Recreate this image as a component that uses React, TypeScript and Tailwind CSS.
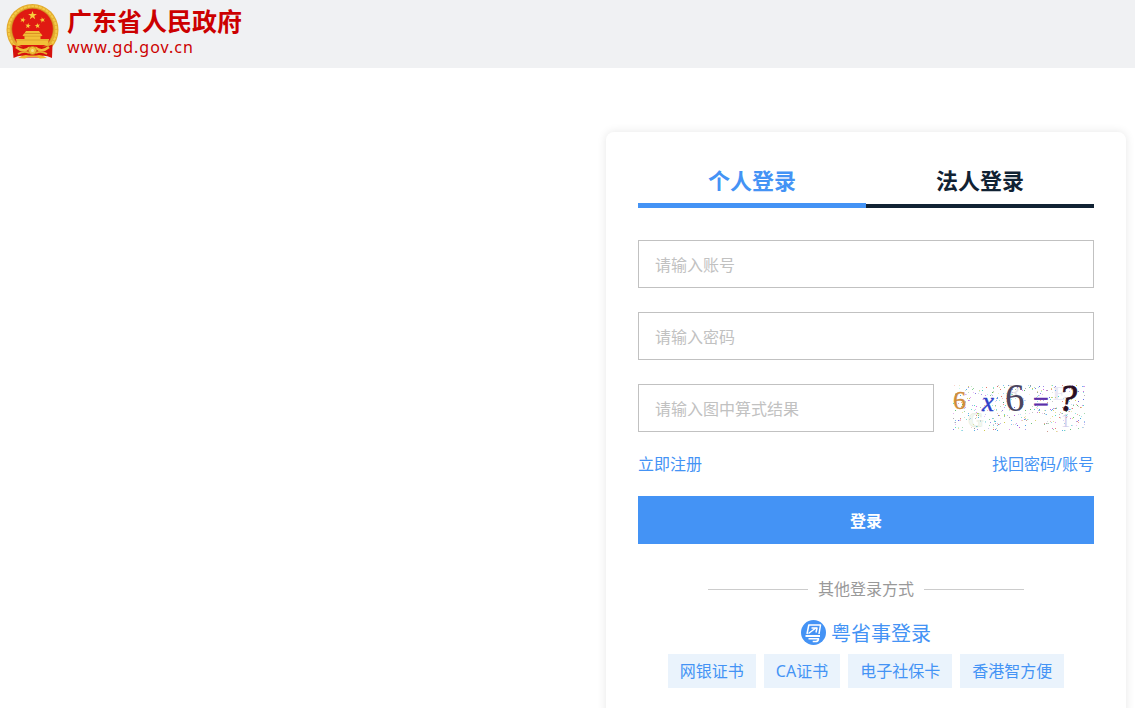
import React, { useState } from "react";

const loginMethods = ["网银证书", "CA证书", "电子社保卡", "香港智方便"];

const speckColors = ["#6a5be0", "#4bb35a", "#e06a5b", "#38a0e0", "#c65be0", "#c9c43e", "#8f8f8f", "#48d6c0"];

// Fixed-seed noise, so that the specks stay put between renders
function makeSpecks(count: number) {
    let seed = 41;
    const next = () => {
        seed = (seed * 16807) % 2147483647;
        return seed / 2147483647;
    };
    return Array.from({ length: count }, () => ({
        x: 3 + Math.floor(next() * 132),
        y: 1 + Math.floor(next() * 47),
        color: speckColors[Math.floor(next() * speckColors.length)],
        opacity: 0.25 + next() * 0.7
    }));
}

const specks = makeSpecks(460);

const star = "M0,-1 L0.235,-0.324 L0.951,-0.309 L0.38,0.124 L0.588,0.809 L0,0.4 L-0.588,0.809 L-0.38,0.124 L-0.951,-0.309 L-0.235,-0.324 Z";

function Emblem() {
    return (
        <svg viewBox="0 0 54 56" className="h-14 w-[54px] shrink-0" aria-hidden="true">
            <circle cx="26.5" cy="27" r="26" fill="#e3ab2e" />
            <circle cx="26.5" cy="27" r="23.8" fill="none" stroke="#f4cb48" strokeWidth="2" strokeDasharray="3 0.8" />
            <circle cx="26.5" cy="26" r="20.8" fill="#e01a12" stroke="#cf8f1e" strokeWidth="0.7" />
            <g fill="#f7cf3d">
                <path d={star} transform="translate(26.5 12.5) scale(4.6)" />
                <path d={star} transform="translate(16.8 17) rotate(15) scale(2.9)" />
                <path d={star} transform="translate(36.5 17) rotate(-15) scale(2.9)" />
                <path d={star} transform="translate(22 22.8) rotate(8) scale(2.9)" />
                <path d={star} transform="translate(31.5 22.8) rotate(-8) scale(2.9)" />
            </g>
            {/* Gate */}
            <path d="M20 28h13l1.5 2.2h-16z M18 30.5h17l1.5 2.5h-20z M18.5 33h16v3h-16z M10 36h33l-1.5 6h-30z" fill="#f2c038" />
            <path d="M19 30.4h15 M17.5 33.2h18 M11 37h31" stroke="#c98a1b" strokeWidth="0.5" />
            {/* Ribbon and gear */}
            <path d="M6.5 41.5Q14 45 21 42.5L32 42.5Q39 45 46.5 41.5L46 55Q37 51 33 54.5H20Q16 51 7.5 55Z" fill="#d5120d" />
            <path d="M10 44q7 6 14 0.5 M43 44q-7 6-14 0.5" fill="none" stroke="#f0bd36" strokeWidth="2.4" />
            <path d="M12 51q6-3.5 11-1 M41 51q-6-3.5-11-1" fill="none" stroke="#e9ae2d" strokeWidth="1.8" />
            <circle cx="26.5" cy="47.5" r="4" fill="#f0bf3b" stroke="#c98a1b" strokeWidth="0.8" />
            <circle cx="26.5" cy="47.5" r="1.5" fill="#f8e28a" />
            <path d="M12 55q6-4.5 11-2.5h7q5-2 11 2.5l-7 .5-3-1.5h-9l-3 1.5z" fill="#efb832" />
        </svg>
    );
}

function Captcha() {
    return (
        <svg
            viewBox="0 0 144 48"
            className="h-12 w-36 shrink-0 overflow-visible font-['Liberation_Serif',serif]"
            role="img"
            aria-label="验证码"
        >
            <g opacity="0.5">
                <text x="18" y="43" fontSize="20" fontWeight="bold" fill="#e9f3e2" stroke="#c6d8ba" strokeWidth="0.5">G</text>
                <text x="103" y="16" fontSize="19" fontWeight="bold" fill="#d6d2ec">E</text>
                <text x="111" y="43" fontSize="18" fill="#a79cd6">1</text>
                <text x="58" y="14" fontSize="19" fill="#c6c4d0">R</text>
            </g>
            {specks.map((s, i) => (
                <rect key={i} x={s.x} y={s.y} width="1" height="1" fill={s.color} opacity={s.opacity} />
            ))}
            <text x="3" y="25" fontSize="26" fill="#d08c38" stroke="#d08c38" strokeWidth="0.4">6</text>
            <text x="32" y="27" fontSize="27" fontStyle="italic" fill="#2d42c9" stroke="#2d42c9" strokeWidth="0.4">x</text>
            <text x="55" y="27" fontSize="39" fill="#4b465f">6</text>
            <text x="83" y="27" fontSize="28" fill="#5b2eaa" stroke="#5b2eaa" strokeWidth="0.6">=</text>
            <text x="108" y="27" fontSize="38" fontStyle="italic" fill="#2a0d22" stroke="#2a0d22" strokeWidth="0.8">?</text>
        </svg>
    );
}

function YueIcon() {
    return (
        <svg viewBox="0 0 25 25" className="size-[25px]" aria-hidden="true">
            <circle cx="12.5" cy="12.5" r="12.5" fill="#4493f5" />
            <g fill="none" stroke="#fff" strokeLinejoin="round">
                <path d="M6 14L7.8 5H19.5L18 14" strokeWidth="1.5" />
                <path d="M7.5 13.5L15.5 7.5 M10.5 8h5.5l-1 4.5" strokeWidth="1.5" />
                <path d="M4.5 16h14.5" strokeWidth="2" />
                <path d="M7.5 18.8h10q-.3 2.7-2.8 2.7h-3" strokeWidth="1.6" />
            </g>
        </svg>
    );
}

const inputClass =
    "h-12 w-full min-w-0 border border-[#c1c1c1] bg-white px-4 pt-0.5 text-base text-[#112233] outline-none placeholder:text-[#c1c1c1] focus:border-[#4493f5]";

export default function App() {
    const [tab, setTab] = useState("personal");

    const tabs = [
        { id: "personal", label: "个人登录" },
        { id: "corporate", label: "法人登录" }
    ];

    return (
        <div className="min-h-screen bg-white font-['Noto_Sans','Noto_Sans_CJK_SC',sans-serif] text-base">
            <header className="h-[68px] bg-[#f0f1f3]">
                <a href="#" className="inline-flex items-start gap-[7px] pt-[3px] pl-[6px] text-[#cc0000]">
                    <Emblem />
                    <span className="flex flex-col">
                        <span className="text-[25px] leading-9 font-bold">广东省人民政府</span>
                        <span className="text-base leading-4 tracking-[1px]">www.gd.gov.cn</span>
                    </span>
                </a>
            </header>

            <main className="flex justify-end pt-16 pr-[9px]">
                <section className="w-full max-w-[520px] rounded-lg bg-white p-8 shadow-[0_0_10px_rgba(0,0,0,0.1)]">
                    <div className="grid grid-cols-2 items-end" role="tablist">
                        {tabs.map((t) => (
                            <button
                                key={t.id}
                                type="button"
                                role="tab"
                                aria-selected={tab === t.id}
                                onClick={() => setTab(t.id)}
                                className={
                                    tab === t.id
                                        ? "h-11 border-b-[5px] border-[#4493f5] pb-2 text-[22px] leading-8 font-bold text-[#4493f5]"
                                        : "h-11 border-b-4 border-[#112233] pb-2 text-[22px] leading-8 font-bold text-[#112233]"
                                }
                            >
                                {t.label}
                            </button>
                        ))}
                    </div>

                    <form className="mt-8" onSubmit={(e) => e.preventDefault()}>
                        <div className="flex flex-col gap-6">
                            <input type="text" aria-label="账号" placeholder="请输入账号" className={inputClass} />
                            <input type="password" aria-label="密码" placeholder="请输入密码" className={inputClass} />
                            <div className="flex gap-4">
                                <input type="text" aria-label="图中算式结果" placeholder="请输入图中算式结果" className={inputClass} />
                                <Captcha />
                            </div>
                        </div>
                        <div className="my-5 flex justify-between leading-6 text-[#4493f5]">
                            <a href="#">立即注册</a>
                            <a href="#">找回密码/账号</a>
                        </div>
                        <button type="submit" className="h-12 w-full bg-[#4493f5] pt-0.5 font-bold text-white">
                            登录
                        </button>
                    </form>

                    <div className="mt-8 flex items-center justify-center gap-2.5 leading-[26px] text-[#999999]">
                        <span className="h-px w-[100px] bg-[#cccccc]" />
                        <span>其他登录方式</span>
                        <span className="h-px w-[100px] bg-[#cccccc]" />
                    </div>

                    <div className="mt-4 flex justify-center">
                        <a href="#" className="flex items-start gap-[5px] pt-0.5 text-xl leading-7 text-[#4493f5]">
                            <YueIcon />
                            粤省事登录
                        </a>
                    </div>

                    <div className="mt-1.5 flex flex-wrap justify-center gap-2">
                        {loginMethods.map((name) => (
                            <a key={name} href="#" className="bg-[#eaf3fc] px-3 leading-[34px] text-[#4493f5]">
                                {name}
                            </a>
                        ))}
                    </div>
                </section>
            </main>
        </div>
    );
}
